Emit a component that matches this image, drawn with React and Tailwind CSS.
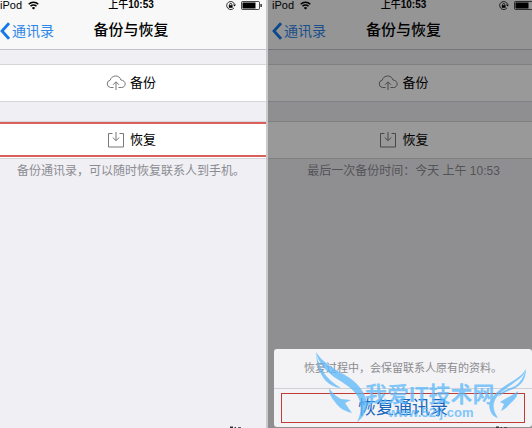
const WifiIcon = () => (
    <svg className="h-[9px] w-[11px]" viewBox="0 0 11 9" fill="none" stroke="currentColor" strokeWidth="1.5">
        <path d="M.7 3.2a6.8 6.8 0 0 1 9.6 0M2.5 5.2a4.2 4.2 0 0 1 6 0" />
        <path d="M5.5 8.6 3.8 6.9a2.4 2.4 0 0 1 3.4 0z" fill="currentColor" stroke="none" />
    </svg>
);

const LockIcon = () => (
    <svg className="h-[9px] w-[10px]" viewBox="0 0 10 9" fill="none" stroke="currentColor">
        <path d="M8 6.8A4 4 0 1 1 8.4 3" strokeWidth=".8" />
        <path d="M7 3.4h3L8.6 5.4z" fill="currentColor" stroke="none" />
        <path d="M3.6 4.3v-.8a1.1 1.1 0 0 1 2.2 0v.8" strokeWidth=".8" />
        <path d="M2.8 4.2h3.8v2.6H2.8z" fill="currentColor" stroke="none" />
    </svg>
);

const BatteryIcon = () => (
    <svg className="h-[9px] w-[21px]" viewBox="0 0 21 9">
        <rect x=".5" y=".5" width="18" height="8" rx="1" fill="none" stroke="currentColor" strokeWidth=".7" />
        <path d="M1.500 1.500h13v6h-13zM19.500 3h1.200v3h-1.200z" fill="currentColor" />
    </svg>
);

const CloudIcon = () => (
    <svg className="h-4 w-5" viewBox="0 0 20 16" fill="none" stroke="#777" strokeWidth="1">
        <path d="M7.500 12.500H4.500a3.700 3.700 0 0 1-.3-7.300C4.800 2.700 7 1 9.600 1c2.700 0 4.800 1.600 5.300 4 2.500.2 4.300 1.800 4.300 3.900 0 2.100-1.600 3.600-3.700 3.600H12.500" />
        <path d="M10 15V7M7 9.800l3-3 3 3" />
    </svg>
);

const InboxIcon = () => (
    <svg className="h-4 w-5" viewBox="0 0 20 16" fill="none" stroke="#777" strokeWidth="1">
        <path d="M6.500 1.500h-4v13.500h15V1.500h-4M10 0v8.500M6.800 5.500l3.200 3.200 3.200-3.200" />
    </svg>
);

const Row = ({ icon, inset, children }) => (
    <button
        type="button"
        className="h-[38px] w-full border-y border-[#d6d6da] bg-white text-[13px] text-black"
    >
        <span className={`flex items-center justify-center gap-1 ${inset}`}>
            {icon}
            {children}
        </span>
    </button>
);

const Phone = ({ inset, caption, marked, children }) => (
    <section className="relative overflow-hidden bg-[#efeff4]">
        <header className="border-b border-[#c4c4c8] bg-[#f8f8f8]">
            <div className={`grid h-[10px] grid-cols-[1fr_auto_1fr] items-center text-[11px] leading-[10px] ${inset}`}>
                <div className="flex items-center gap-[6px]">
                    <span>iPod</span>
                    <WifiIcon />
                </div>
                <span className="text-[10px] font-medium">
                    上午<b>10:53</b>
                </span>
                <div className="flex items-center justify-end gap-[5px]">
                    <LockIcon />
                    <BatteryIcon />
                </div>
            </div>
            <div className={`grid h-[39px] grid-cols-[1fr_auto_1fr] items-center pt-[2px] ${inset}`}>
                <a href="#contacts" className="flex items-center gap-[2px] text-sm text-[#2f86e8]">
                    <svg className="h-[18px] w-[10px]" viewBox="0 0 10 18" fill="none" stroke="#1479e8" strokeWidth="2.800">
                        <path d="M9 1.200 2 9l7 7.800" />
                    </svg>
                    通讯录
                </a>
                <h1 className="text-[15px] font-medium">备份与恢复</h1>
            </div>
        </header>
        <div className="mt-[14px]">
            <Row icon={<CloudIcon />} inset={inset}>备份</Row>
        </div>
        <div className="relative mt-[19px]">
            <Row icon={<InboxIcon />} inset={inset}>恢复</Row>
            {marked && (
                <div className="pointer-events-none absolute inset-x-0 top-px bottom-[2px] border-y-2 border-[#d9605c]" />
            )}
        </div>
        <p className={`mt-1 text-center text-xs leading-4 text-[#8c8c91] ${inset}`}>{caption}</p>
        {children}
        <svg className="absolute right-6 bottom-0 h-[2px] w-3" viewBox="0 0 12 2" fill="#333">
            <path d="M0 .6h3V2H0zM4.500 1h1.500v1H4.500zM8 1.300h3V2H8z" />
        </svg>
    </section>
);

const Watermark = () => (
    <div className="pointer-events-none absolute inset-x-0 bottom-0 h-[78px] text-[#5bb8fb] opacity-75">
        <svg className="absolute top-0 left-[40px] h-[78px] w-[218px]" viewBox="314 349 218 78" fill="currentColor">
            <path d="M316 352C322 362 334 369 345 375C357 382 366 392 367 404C367 411 363 418 357 422C361 414 362 406 359 399C355 389 343 383 334 377C325 370 318 362 316 352z" />
            <path d="M316 352C318 368 327 380 341 388C328 387 317 376 316 352z" />
            <path d="M329 388C333 394 337 397 341 399L351 400L345 403L352 413C342 411 337 405 335 402C331 398 329 393 329 388z" />
            <path d="M526 369C520 379 509 382 502 388C493 395 487 402 490 410C491 414 494 417 498 418C494 412 492 406 495 400C499 392 509 387 515 382C521 378 525 374 526 369z" />
            <path d="M526 369C526 379 521 386 513 389C508 391 503 393 498 397C502 389 510 389 515 386C521 382 524 376 526 369z" />
            <path d="M518 391C512 396 506 398 500 402L504 404L501 411C507 409 509 404 513 401C516 398 518 395 518 391z" />
        </svg>
        <div className="absolute top-[34px] left-[91px] text-[22px] leading-6 font-bold whitespace-nowrap">我爱IT技术网</div>
        <div className="absolute top-[56px] left-[114px] text-[13px] leading-4 font-bold whitespace-nowrap">www.52ij.com</div>
    </div>
);

export default function App() {
    return (
        <main className="grid min-h-screen grid-cols-[266fr_264fr] gap-[2px] overflow-hidden bg-[#c9c9cc] font-['Liberation_Sans','Noto_Sans_CJK_SC',sans-serif] text-black">
            <Phone inset="pr-1" caption="备份通讯录，可以随时恢复联系人到手机。" marked />
            <Phone inset="-mr-[3px] pl-1" caption="最后一次备份时间：今天 上午 10:53">
                <div className="absolute inset-0 bg-black/40" />
                <div className="absolute right-0 bottom-px left-[6px] rounded-[3px] bg-[#f3f3f5]">
                    <p className="flex h-10 items-center justify-center border-b border-[#d0d0d8] text-[11px] text-[#8c8c91]">
                        恢复过程中，会保留联系人原有的资料。
                    </p>
                    <div className="px-[7px] pt-1 pb-1">
                        <button type="button" className="h-[30px] w-full border border-[#c23b34] text-lg leading-7 text-[#1766bd]">
                            恢复通讯录
                        </button>
                    </div>
                    <Watermark />
                </div>
            </Phone>
        </main>
    );
}
